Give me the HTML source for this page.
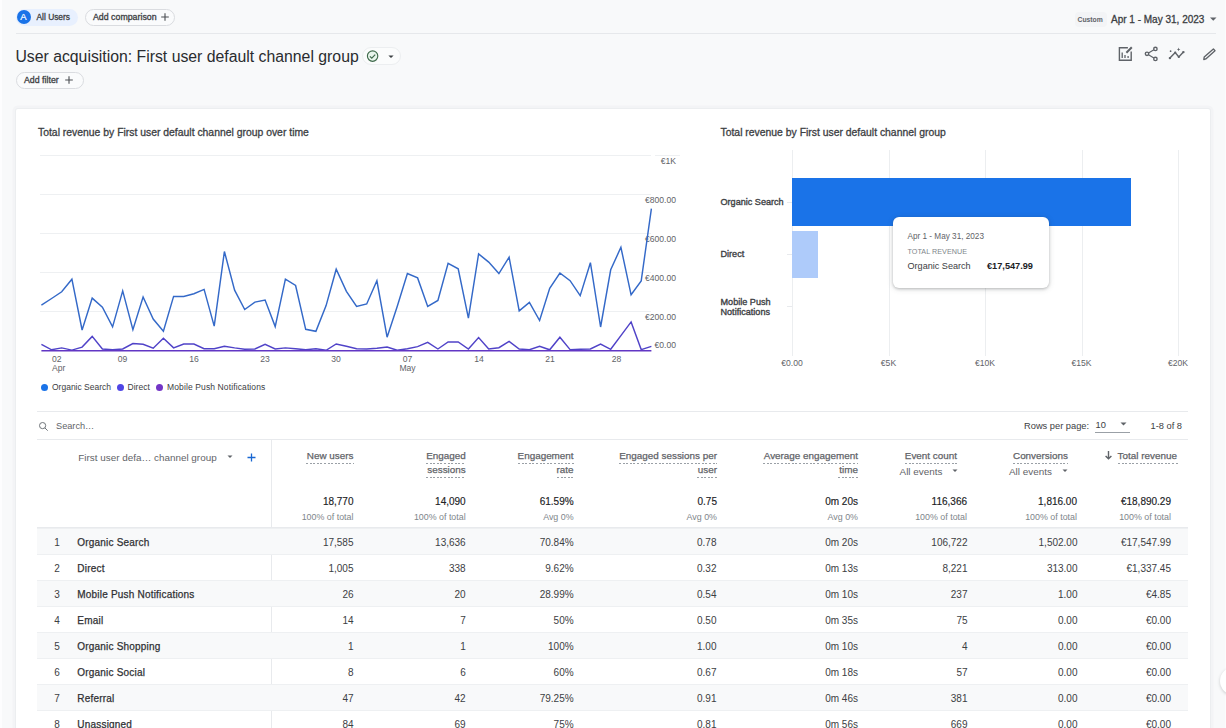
<!DOCTYPE html>
<html><head><meta charset="utf-8">
<style>
*{box-sizing:border-box;margin:0;padding:0}
html,body{width:1226px;height:728px;overflow:hidden;background:#f8f9fa;font-family:"Liberation Sans",sans-serif;color:#202124}
.a{position:absolute;white-space:nowrap}
.t{position:absolute;white-space:nowrap;line-height:12px;height:12px}
.r{text-align:right}
.c{text-align:center}
.chip{position:absolute;border-radius:10px}
.card{position:absolute;left:15.6px;top:108.6px;width:1194.6px;height:700px;background:#fff;border-radius:2px;box-shadow:0 0 0 1px #eceef0,0 0 0 3.5px #f3f4f6}
.hl{position:absolute;height:1px;background:#e8eaed}
.gl{position:absolute;height:1px;background:#eef0f2}
.vl{position:absolute;width:1px;background:#e8eaed}
.gv{position:absolute;width:1px;background:#eceef0}
.ax{font-size:8.6px;color:#5f6368}
.lg{font-size:8.5px;color:#3c4043}
.hd{font-size:9.9px;color:#5f6368;-webkit-text-stroke:0.25px currentColor}
.u{position:absolute;height:1px;background:repeating-linear-gradient(90deg,#9aa0a6 0 2px,transparent 2px 3.6px)}
.tot{font-size:10px;color:#202124;-webkit-text-stroke:0.15px currentColor}
.sub{font-size:8.9px;color:#80868b}
.row{position:absolute;left:37px;width:1151px;height:26px;border-top:1px solid #eef0f2}
.row.g{background:#f8f9fa}
.rn{font-size:10px;color:#3c4043}
.m{-webkit-text-stroke:0.3px currentColor}
.nm{font-size:10px;color:#303134;letter-spacing:0.2px;-webkit-text-stroke:0.25px currentColor}
.v{font-size:10px;color:#3c4043}
</style></head>
<body>
<div class="a" style="left:0;top:0;width:2px;height:728px;background:#fdfdfe"></div>
<div class="a" style="left:1224.5px;top:0;width:2px;height:728px;background:#fbfcfd"></div>
<!-- top bar -->
<div class="chip" style="left:16px;top:9px;width:62px;height:17px;background:#e8f0fe"></div>
<div class="a" style="left:16.5px;top:10px;width:14px;height:14px;border-radius:50%;background:#1a73e8;color:#fff;font-size:9.5px;line-height:14px;text-align:center;-webkit-text-stroke:0.2px #fff">A</div>
<div class="t m" style="left:36.5px;top:11px;font-size:8.4px;color:#3c4043">All Users</div>
<div class="chip" style="left:85px;top:8.5px;width:90px;height:17.5px;border:1px solid #dadce0;background:#fafbfc"></div>
<div class="t m" style="left:93px;top:11px;font-size:8.8px;color:#3c4043">Add comparison</div>
<svg class="a" style="left:160px;top:12px" width="10" height="10"><path d="M5 1.2v7.6M1.2 5h7.6" stroke="#4a4e52" stroke-width="1.1"/></svg>

<div class="chip" style="left:1075px;top:12px;width:32px;height:15px;background:#f3f4f6;border-radius:4px"></div>
<div class="t" style="left:1077.5px;top:13.8px;font-size:6.8px;font-weight:bold;color:#5f6368">Custom</div>
<div class="t m" style="left:1111px;top:14px;font-size:10px;color:#3c4043;-webkit-text-stroke:0.3px #3c4043">Apr 1 - May 31, 2023</div>
<svg class="a" style="left:1209.5px;top:16.5px" width="8" height="6"><path d="M0 0.5h6.5l-3.25 3.25z" fill="#5f6368"/></svg>
<div class="hl" style="left:16px;top:33px;width:1200px;background:#e6e8eb"></div>

<!-- title -->
<div class="a" style="left:15.4px;top:46.6px;font-size:15.8px;line-height:20px;color:#2a2c2f">User acquisition: First user default channel group</div>
<div class="chip" style="left:362px;top:46.5px;width:39px;height:18px;border:1px solid #eceef0;background:#fbfcfc"></div>
<svg class="a" style="left:366px;top:50px" width="14" height="13"><circle cx="6.6" cy="6.1" r="5.2" fill="#e8f5ec" stroke="#3f6a4b" stroke-width="1.15"/><path d="M3.9 6.3l1.9 1.9 3.4-3.5" fill="none" stroke="#3f6a4b" stroke-width="1.2"/></svg>
<svg class="a" style="left:388px;top:55px" width="8" height="6"><path d="M0.4 0.5h5.2l-2.6 2.6z" fill="#3c4043"/></svg>

<div class="chip" style="left:15.5px;top:71.5px;width:68px;height:17px;border:1px solid #dadce0;background:#fafbfc"></div>
<div class="t m" style="left:24px;top:74px;font-size:8.8px;color:#3c4043">Add filter</div>
<svg class="a" style="left:64px;top:75px" width="10" height="10"><path d="M5 1.2v7.6M1.2 5h7.6" stroke="#4a4e52" stroke-width="1.1"/></svg>

<!-- right icons -->
<svg class="a" style="left:1116px;top:45px" width="104" height="18" fill="none" stroke="#5f6368" stroke-width="1.4">
  <path d="M11.9 2.8H3.4V15.2H15.2V6.4"/><path d="M10.4 7.8l5.4-5.6" stroke-width="2"/>
  <path d="M6.2 7.5V13M9 10V13M12.1 11V13" stroke-width="1.3"/>
  <circle cx="31" cy="8.8" r="1.7"/><circle cx="39.4" cy="3.9" r="1.7"/><circle cx="39.4" cy="13.9" r="1.7"/>
  <path d="M32.5 7.9l5.4-3.1M32.5 9.7l5.4 3.3" stroke-width="1.2"/>
  <path d="M53.9 13.1L59.2 7.6L62.8 11.9L67.4 7.1" stroke-width="1.45"/>
  <g fill="#5f6368" stroke="none"><circle cx="53.9" cy="13.1" r="1.2"/><circle cx="59.2" cy="7.6" r="1.1"/><circle cx="62.8" cy="11.9" r="1.1"/><circle cx="67.4" cy="7.1" r="1.2"/>
  <path d="M62.6 2.6l0.5 1.3 1.3 0.5-1.3 0.5-0.5 1.3-0.5-1.3-1.3-0.5 1.3-0.5z"/><circle cx="54.6" cy="6.2" r="0.85"/></g>
  <path d="M87.8 14.6L88.2 12.1L97.4 3.9L99 5.7L89.8 13.9Z" stroke-width="1.35" stroke-linejoin="round"/>
</svg>

<!-- card -->
<div class="card"></div>

<!-- line chart -->
<div class="t m" style="left:38px;top:127px;font-size:10.4px;color:#3c4043">Total revenue by First user default channel group over time</div>
<div class="gl" style="left:40px;top:154.5px;width:611px"></div>
<div class="gl" style="left:655px;top:154.5px;width:25px"></div>
<div class="gl" style="left:40px;top:193.5px;width:611px"></div>
<div class="gl" style="left:40px;top:232.5px;width:611px"></div>
<div class="gl" style="left:40px;top:271.5px;width:611px"></div>
<div class="gl" style="left:40px;top:310.5px;width:611px"></div>
<div class="t r ax" style="left:616px;width:60px;top:155px">€1K</div>
<div class="t r ax" style="left:616px;width:60px;top:193.5px">€800.00</div>
<div class="t r ax" style="left:616px;width:60px;top:232.5px">€600.00</div>
<div class="t r ax" style="left:616px;width:60px;top:272px">€400.00</div>
<div class="t r ax" style="left:616px;width:60px;top:311px">€200.00</div>
<div class="t r ax" style="left:616px;width:60px;top:339px">€0.00</div>
<svg class="a" style="left:0;top:0" width="700" height="400">
  <polyline points="41.4,305.1 51.6,298.5 61.7,291.8 71.9,279.2 82.1,330.0 92.2,298.1 102.4,307.1 112.6,326.9 122.7,290.9 132.9,329.7 143.1,297.0 153.2,319.0 163.4,331.3 173.6,296.4 183.7,296.4 193.9,293.7 204.1,289.4 214.2,326.1 224.4,251.5 234.6,290.2 244.7,309.5 254.9,302.1 265.1,300.0 275.2,326.6 285.4,279.2 295.6,285.5 305.7,329.3 315.9,331.3 326.1,305.6 336.2,269.2 346.4,291.3 356.6,306.4 366.7,304.0 376.9,280.8 387.1,337.2 397.2,306.4 407.4,273.6 417.6,277.9 427.7,306.4 437.9,300.4 448.1,263.4 458.2,268.8 468.4,318.2 478.6,253.9 488.7,262.1 498.9,273.6 509.1,257.1 519.2,310.8 529.4,302.4 539.6,320.5 549.7,288.4 559.9,273.0 570.1,280.7 580.2,295.7 590.4,262.7 600.6,327.0 610.7,269.8 620.9,247.3 631.1,294.8 641.2,280.9 651.4,208.6" fill="none" stroke="#3469c8" stroke-width="1.45" stroke-linejoin="miter"/>
  <polyline points="41.4,344.3 51.6,349.8 61.7,347.9 71.9,350.1 82.1,347.1 92.2,336.4 102.4,349.0 112.6,349.8 122.7,349.0 132.9,343.5 143.1,344.3 153.2,348.2 163.4,338.3 173.6,347.9 183.7,344.0 193.9,344.0 204.1,348.7 214.2,348.7 224.4,346.2 234.6,347.9 244.7,349.3 254.9,349.0 265.1,344.3 275.2,349.0 285.4,347.9 295.6,348.7 305.7,349.8 315.9,348.7 326.1,350.3 336.2,344.0 346.4,346.2 356.6,348.7 366.7,349.0 376.9,348.2 387.1,347.1 397.2,350.3 407.4,348.7 417.6,346.6 427.7,342.4 437.9,349.0 448.1,341.9 458.2,341.9 468.4,349.0 478.6,337.6 488.7,349.0 498.9,347.7 509.1,341.4 519.2,349.0 529.4,349.8 539.6,346.3 549.7,349.8 559.9,337.2 570.1,349.6 580.2,349.3 590.4,349.0 600.6,344.1 610.7,349.3 620.9,335.6 631.1,321.9 641.2,349.6 651.4,346.4" fill="none" stroke="#5043c8" stroke-width="1.45"/>
  <path d="M41.4 350.7H651.4" stroke="#6236c4" stroke-width="1.5"/>
</svg>
<div class="t ax" style="left:52px;top:353px">02</div>
<div class="t ax" style="left:52px;top:361.5px">Apr</div>
<div class="t c ax" style="left:102.5px;width:40px;top:353px">09</div>
<div class="t c ax" style="left:174px;width:40px;top:353px">16</div>
<div class="t c ax" style="left:245px;width:40px;top:353px">23</div>
<div class="t c ax" style="left:316px;width:40px;top:353px">30</div>
<div class="t c ax" style="left:387.5px;width:40px;top:353px">07</div>
<div class="t c ax" style="left:387.5px;width:40px;top:361.5px">May</div>
<div class="t c ax" style="left:459px;width:40px;top:353px">14</div>
<div class="t c ax" style="left:530px;width:40px;top:353px">21</div>
<div class="t c ax" style="left:596.5px;width:40px;top:353px">28</div>
<div class="a" style="left:41.3px;top:383.6px;width:7px;height:7px;border-radius:50%;background:#1a73e8"></div>
<div class="t lg" style="left:52px;top:381px">Organic Search</div>
<div class="a" style="left:116.6px;top:383.6px;width:7px;height:7px;border-radius:50%;background:#4f46e5"></div>
<div class="t lg" style="left:127.6px;top:381px">Direct</div>
<div class="a" style="left:156.2px;top:383.6px;width:7px;height:7px;border-radius:50%;background:#7335c6"></div>
<div class="t lg" style="left:167px;top:381px;letter-spacing:0.12px">Mobile Push Notifications</div>

<!-- bar chart -->
<div class="t m" style="left:720.5px;top:127px;font-size:10.4px;color:#3c4043">Total revenue by First user default channel group</div>
<div class="gv" style="left:792px;top:150px;height:206px"></div>
<div class="gv" style="left:888.5px;top:150px;height:206px"></div>
<div class="gv" style="left:985px;top:150px;height:206px"></div>
<div class="gv" style="left:1081.5px;top:150px;height:206px"></div>
<div class="gv" style="left:1178px;top:150px;height:206px"></div>
<div class="hl" style="left:787px;top:201.5px;width:5px"></div>
<div class="hl" style="left:787px;top:254px;width:5px"></div>
<div class="hl" style="left:787px;top:306px;width:5px"></div>
<div class="a" style="left:792px;top:178px;width:339px;height:47.5px;background:#1a73e8"></div>
<div class="a" style="left:792px;top:230.5px;width:26px;height:47px;background:#aecbfa"></div>
<div class="t" style="left:720.5px;top:196px;font-size:9.1px;color:#3c4043;-webkit-text-stroke:0.35px currentColor">Organic Search</div>
<div class="t" style="left:720.5px;top:248px;font-size:9.1px;color:#3c4043;-webkit-text-stroke:0.35px currentColor">Direct</div>
<div class="t" style="left:720.5px;top:296px;font-size:9.1px;color:#3c4043;-webkit-text-stroke:0.35px currentColor">Mobile Push</div>
<div class="t" style="left:720.5px;top:306px;font-size:9.1px;color:#3c4043;-webkit-text-stroke:0.35px currentColor">Notifications</div>
<div class="t c ax" style="left:762px;width:60px;top:356.5px">€0.00</div>
<div class="t c ax" style="left:858.5px;width:60px;top:356.5px">€5K</div>
<div class="t c ax" style="left:955px;width:60px;top:356.5px">€10K</div>
<div class="t c ax" style="left:1051.5px;width:60px;top:356.5px">€15K</div>
<div class="t c ax" style="left:1148px;width:60px;top:356.5px">€20K</div>
<div class="a" style="left:893px;top:217px;width:155.5px;height:70.5px;background:#fff;border-radius:6px;box-shadow:0 1px 3px rgba(60,64,67,.3),0 1px 6px rgba(60,64,67,.15)"></div>
<div class="t" style="left:907.5px;top:231px;font-size:8.2px;color:#5f6368">Apr 1 - May 31, 2023</div>
<div class="t" style="left:907.5px;top:245.5px;font-size:7.2px;color:#80868b;letter-spacing:0.05px">TOTAL REVENUE</div>
<div class="t" style="left:907.5px;top:260.3px;font-size:9.1px;color:#3c4043">Organic Search</div>
<div class="t" style="left:987px;top:260px;font-size:9.2px;font-weight:bold;color:#202124">€17,547.99</div>

<!-- table -->
<div class="hl" style="left:37px;top:410.5px;width:1151px"></div>
<svg class="a" style="left:38px;top:421px" width="11" height="11" fill="none" stroke="#70757a" stroke-width="1"><circle cx="4.6" cy="4.6" r="3.1"/><path d="M6.9 6.9l2.8 2.8"/></svg>
<div class="t" style="left:56px;top:420px;font-size:9.2px;color:#5f6368">Search…</div>
<div class="t" style="left:1024px;top:419.5px;font-size:9.3px;color:#3c4043">Rows per page:</div>
<div class="t" style="left:1095.5px;top:418.5px;font-size:9.3px;color:#3c4043">10</div>
<svg class="a" style="left:1120px;top:422px" width="8" height="6"><path d="M0.5 0.5h6l-3 3z" fill="#5f6368"/></svg>
<div class="hl" style="left:1095px;top:432px;width:35px;background:#9aa0a6"></div>
<div class="t" style="left:1150.5px;top:419.5px;font-size:9.3px;color:#3c4043">1-8 of 8</div>
<div class="hl" style="left:37px;top:439px;width:1151px"></div>
<div class="vl" style="left:271px;top:439px;height:300px"></div>

<div class="t hd" style="left:78.3px;top:451.5px;-webkit-text-stroke:0">First user defa… channel group</div>
<svg class="a" style="left:227px;top:455px" width="8" height="6"><path d="M0.5 0.5h5l-2.5 2.5z" fill="#5f6368"/></svg>
<svg class="a" style="left:245.5px;top:451.5px" width="11" height="11"><path d="M5.5 1.5v8M1.5 5.5h8" stroke="#1967d2" stroke-width="1.3"/></svg>

<div class="t r hd" style="left:253.5px;width:100px;top:449.5px">New users</div>
<div class="u" style="left:306px;top:462.5px;width:47.5px"></div>
<div class="t r hd" style="left:365.7px;width:100px;top:449.5px">Engaged</div>
<div class="u" style="left:426px;top:462.5px;width:40px"></div>
<div class="t r hd" style="left:365.7px;width:100px;top:463.5px">sessions</div>
<div class="u" style="left:426px;top:477px;width:40px"></div>
<div class="t r hd" style="left:473.6px;width:100px;top:449.5px">Engagement</div>
<div class="u" style="left:518px;top:462.5px;width:56px"></div>
<div class="t r hd" style="left:473.6px;width:100px;top:463.5px">rate</div>
<div class="u" style="left:557px;top:477px;width:17px"></div>
<div class="t r hd" style="left:597px;width:120px;top:449.5px">Engaged sessions per</div>
<div class="u" style="left:619px;top:462.5px;width:98px"></div>
<div class="t r hd" style="left:597px;width:120px;top:463.5px">user</div>
<div class="u" style="left:697px;top:477px;width:20px"></div>
<div class="t r hd" style="left:738px;width:120px;top:449.5px">Average engagement</div>
<div class="u" style="left:763px;top:462.5px;width:95px"></div>
<div class="t r hd" style="left:738px;width:120px;top:463.5px">time</div>
<div class="u" style="left:838px;top:477px;width:20px"></div>
<div class="t hd" style="left:904.8px;top:449.5px">Event count</div>
<div class="u" style="left:904.8px;top:462.5px;width:52px"></div>
<div class="t hd" style="left:899.6px;top:466px;color:#5f6368;-webkit-text-stroke:0">All events</div>
<svg class="a" style="left:952px;top:469px" width="8" height="6"><path d="M0.5 0.5h5l-2.5 2.5z" fill="#5f6368"/></svg>
<div class="t hd" style="left:1013px;top:449.5px">Conversions</div>
<div class="u" style="left:1013px;top:462.5px;width:55px"></div>
<div class="t hd" style="left:1009px;top:466px;color:#5f6368;-webkit-text-stroke:0">All events</div>
<svg class="a" style="left:1062px;top:469px" width="8" height="6"><path d="M0.5 0.5h5l-2.5 2.5z" fill="#5f6368"/></svg>
<svg class="a" style="left:1104px;top:450px" width="10" height="11" fill="none" stroke="#5f6368" stroke-width="1.4"><path d="M4.5 1v8M1.6 5.9l2.9 2.9 2.9-2.9"/></svg>
<div class="t hd" style="left:1117.6px;top:449.5px">Total revenue</div>
<div class="u" style="left:1117.6px;top:462.5px;width:60px"></div>

<div class="t r tot" style="left:253.5px;width:100px;top:496px">18,770</div>
<div class="t r sub" style="left:253.5px;width:100px;top:511px">100% of total</div>
<div class="t r tot" style="left:365.7px;width:100px;top:496px">14,090</div>
<div class="t r sub" style="left:365.7px;width:100px;top:511px">100% of total</div>
<div class="t r tot" style="left:473.6px;width:100px;top:496px">61.59%</div>
<div class="t r sub" style="left:473.6px;width:100px;top:511px">Avg 0%</div>
<div class="t r tot" style="left:617px;width:100px;top:496px">0.75</div>
<div class="t r sub" style="left:617px;width:100px;top:511px">Avg 0%</div>
<div class="t r tot" style="left:758px;width:100px;top:496px">0m 20s</div>
<div class="t r sub" style="left:758px;width:100px;top:511px">Avg 0%</div>
<div class="t r tot" style="left:867px;width:100px;top:496px">116,366</div>
<div class="t r sub" style="left:867px;width:100px;top:511px">100% of total</div>
<div class="t r tot" style="left:977px;width:100px;top:496px">1,816.00</div>
<div class="t r sub" style="left:977px;width:100px;top:511px">100% of total</div>
<div class="t r tot" style="left:1071px;width:100px;top:496px">€18,890.29</div>
<div class="t r sub" style="left:1071px;width:100px;top:511px">100% of total</div>
<div class="hl" style="left:37px;top:527px;width:1151px"></div>

<div class="row g" style="top:527.5px"></div>
<div class="t c rn" style="left:47px;width:20px;top:536.8px">1</div>
<div class="t nm" style="left:77.3px;top:536.8px">Organic Search</div>
<div class="t r v" style="left:253.5px;width:100px;top:536.8px">17,585</div>
<div class="t r v" style="left:365.7px;width:100px;top:536.8px">13,636</div>
<div class="t r v" style="left:473.6px;width:100px;top:536.8px">70.84%</div>
<div class="t r v" style="left:616.5px;width:100px;top:536.8px">0.78</div>
<div class="t r v" style="left:758px;width:100px;top:536.8px">0m 20s</div>
<div class="t r v" style="left:867.5px;width:100px;top:536.8px">106,722</div>
<div class="t r v" style="left:977.5px;width:100px;top:536.8px">1,502.00</div>
<div class="t r v" style="left:1071px;width:100px;top:536.8px">€17,547.99</div>
<div class="row" style="top:553.5px"></div>
<div class="t c rn" style="left:47px;width:20px;top:562.8px">2</div>
<div class="t nm" style="left:77.3px;top:562.8px">Direct</div>
<div class="t r v" style="left:253.5px;width:100px;top:562.8px">1,005</div>
<div class="t r v" style="left:365.7px;width:100px;top:562.8px">338</div>
<div class="t r v" style="left:473.6px;width:100px;top:562.8px">9.62%</div>
<div class="t r v" style="left:616.5px;width:100px;top:562.8px">0.32</div>
<div class="t r v" style="left:758px;width:100px;top:562.8px">0m 13s</div>
<div class="t r v" style="left:867.5px;width:100px;top:562.8px">8,221</div>
<div class="t r v" style="left:977.5px;width:100px;top:562.8px">313.00</div>
<div class="t r v" style="left:1071px;width:100px;top:562.8px">€1,337.45</div>
<div class="row g" style="top:579.5px"></div>
<div class="t c rn" style="left:47px;width:20px;top:588.8px">3</div>
<div class="t nm" style="left:77.3px;top:588.8px">Mobile Push Notifications</div>
<div class="t r v" style="left:253.5px;width:100px;top:588.8px">26</div>
<div class="t r v" style="left:365.7px;width:100px;top:588.8px">20</div>
<div class="t r v" style="left:473.6px;width:100px;top:588.8px">28.99%</div>
<div class="t r v" style="left:616.5px;width:100px;top:588.8px">0.54</div>
<div class="t r v" style="left:758px;width:100px;top:588.8px">0m 10s</div>
<div class="t r v" style="left:867.5px;width:100px;top:588.8px">237</div>
<div class="t r v" style="left:977.5px;width:100px;top:588.8px">1.00</div>
<div class="t r v" style="left:1071px;width:100px;top:588.8px">€4.85</div>
<div class="row" style="top:605.5px"></div>
<div class="t c rn" style="left:47px;width:20px;top:614.8px">4</div>
<div class="t nm" style="left:77.3px;top:614.8px">Email</div>
<div class="t r v" style="left:253.5px;width:100px;top:614.8px">14</div>
<div class="t r v" style="left:365.7px;width:100px;top:614.8px">7</div>
<div class="t r v" style="left:473.6px;width:100px;top:614.8px">50%</div>
<div class="t r v" style="left:616.5px;width:100px;top:614.8px">0.50</div>
<div class="t r v" style="left:758px;width:100px;top:614.8px">0m 35s</div>
<div class="t r v" style="left:867.5px;width:100px;top:614.8px">75</div>
<div class="t r v" style="left:977.5px;width:100px;top:614.8px">0.00</div>
<div class="t r v" style="left:1071px;width:100px;top:614.8px">€0.00</div>
<div class="row g" style="top:631.5px"></div>
<div class="t c rn" style="left:47px;width:20px;top:640.8px">5</div>
<div class="t nm" style="left:77.3px;top:640.8px">Organic Shopping</div>
<div class="t r v" style="left:253.5px;width:100px;top:640.8px">1</div>
<div class="t r v" style="left:365.7px;width:100px;top:640.8px">1</div>
<div class="t r v" style="left:473.6px;width:100px;top:640.8px">100%</div>
<div class="t r v" style="left:616.5px;width:100px;top:640.8px">1.00</div>
<div class="t r v" style="left:758px;width:100px;top:640.8px">0m 10s</div>
<div class="t r v" style="left:867.5px;width:100px;top:640.8px">4</div>
<div class="t r v" style="left:977.5px;width:100px;top:640.8px">0.00</div>
<div class="t r v" style="left:1071px;width:100px;top:640.8px">€0.00</div>
<div class="row" style="top:657.5px"></div>
<div class="t c rn" style="left:47px;width:20px;top:666.8px">6</div>
<div class="t nm" style="left:77.3px;top:666.8px">Organic Social</div>
<div class="t r v" style="left:253.5px;width:100px;top:666.8px">8</div>
<div class="t r v" style="left:365.7px;width:100px;top:666.8px">6</div>
<div class="t r v" style="left:473.6px;width:100px;top:666.8px">60%</div>
<div class="t r v" style="left:616.5px;width:100px;top:666.8px">0.67</div>
<div class="t r v" style="left:758px;width:100px;top:666.8px">0m 18s</div>
<div class="t r v" style="left:867.5px;width:100px;top:666.8px">57</div>
<div class="t r v" style="left:977.5px;width:100px;top:666.8px">0.00</div>
<div class="t r v" style="left:1071px;width:100px;top:666.8px">€0.00</div>
<div class="row g" style="top:683.5px"></div>
<div class="t c rn" style="left:47px;width:20px;top:692.8px">7</div>
<div class="t nm" style="left:77.3px;top:692.8px">Referral</div>
<div class="t r v" style="left:253.5px;width:100px;top:692.8px">47</div>
<div class="t r v" style="left:365.7px;width:100px;top:692.8px">42</div>
<div class="t r v" style="left:473.6px;width:100px;top:692.8px">79.25%</div>
<div class="t r v" style="left:616.5px;width:100px;top:692.8px">0.91</div>
<div class="t r v" style="left:758px;width:100px;top:692.8px">0m 46s</div>
<div class="t r v" style="left:867.5px;width:100px;top:692.8px">381</div>
<div class="t r v" style="left:977.5px;width:100px;top:692.8px">0.00</div>
<div class="t r v" style="left:1071px;width:100px;top:692.8px">€0.00</div>
<div class="row" style="top:709.5px"></div>
<div class="t c rn" style="left:47px;width:20px;top:718.8px">8</div>
<div class="t nm" style="left:77.3px;top:718.8px">Unassigned</div>
<div class="t r v" style="left:253.5px;width:100px;top:718.8px">84</div>
<div class="t r v" style="left:365.7px;width:100px;top:718.8px">69</div>
<div class="t r v" style="left:473.6px;width:100px;top:718.8px">75%</div>
<div class="t r v" style="left:616.5px;width:100px;top:718.8px">0.81</div>
<div class="t r v" style="left:758px;width:100px;top:718.8px">0m 56s</div>
<div class="t r v" style="left:867.5px;width:100px;top:718.8px">669</div>
<div class="t r v" style="left:977.5px;width:100px;top:718.8px">0.00</div>
<div class="t r v" style="left:1071px;width:100px;top:718.8px">€0.00</div>
<div class="a" style="left:1220px;top:667px;width:28px;height:28px;border-radius:50%;background:#fff;box-shadow:0 1px 3px rgba(60,64,67,.25)"></div>
</body></html>
